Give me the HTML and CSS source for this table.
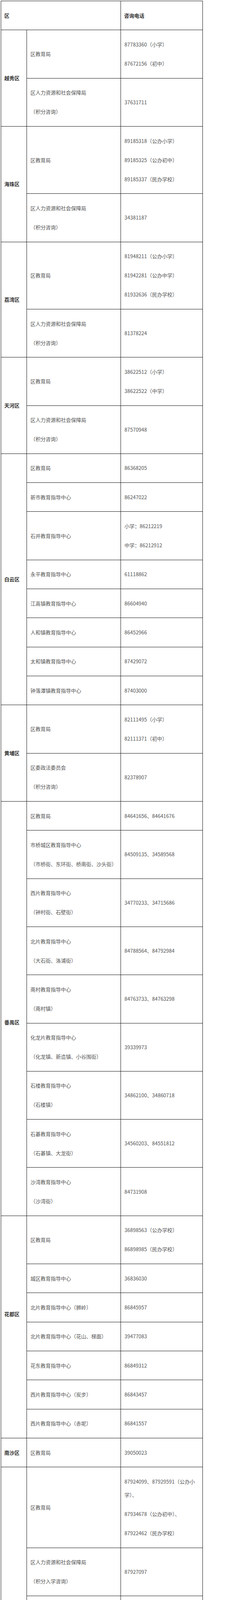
FILE: index.html
```html
<!DOCTYPE html>
<html lang="zh-CN">
<head>
<meta charset="utf-8">
<meta name="viewport" content="width=device-width, initial-scale=1">
<title>各区入学咨询电话</title>
<link rel="stylesheet" href="styles.css">
</head>
<body>
<table class="grid">
  <colgroup>
    <col class="c-dist">
    <col class="c-unit">
    <col class="c-tel">
  </colgroup>
  <thead>
    <tr><th colspan="2"><p>区</p></th><th><p>咨询电话</p></th></tr>
  </thead>
  <tbody>
    <tr><td class="dist" rowspan="2"><p>越秀区</p></td><td><p>区教育局</p></td><td><p>87783360（小学）</p><p>87672156（初中）</p></td></tr>
    <tr><td><p>区人力资源和社会保障局</p><p>（积分咨询）</p></td><td><p>37631711</p></td></tr>

    <tr><td class="dist" rowspan="2"><p>海珠区</p></td><td><p>区教育局</p></td><td><p>89185318（公办小学）</p><p>89185325（公办初中）</p><p>89185337（民办学校）</p></td></tr>
    <tr><td><p>区人力资源和社会保障局</p><p>（积分咨询）</p></td><td><p>34381187</p></td></tr>

    <tr><td class="dist" rowspan="2"><p>荔湾区</p></td><td><p>区教育局</p></td><td><p>81948211（公办小学）</p><p>81942281（公办中学）</p><p>81932636（民办学校）</p></td></tr>
    <tr><td><p>区人力资源和社会保障局</p><p>（积分咨询）</p></td><td><p>81378224</p></td></tr>

    <tr><td class="dist" rowspan="2"><p>天河区</p></td><td><p>区教育局</p></td><td><p>38622512（小学）</p><p>38622522（中学）</p></td></tr>
    <tr><td><p>区人力资源和社会保障局</p><p>（积分咨询）</p></td><td><p>87570948</p></td></tr>

    <tr><td class="dist" rowspan="8"><p>白云区</p></td><td><p>区教育局</p></td><td><p>86368205</p></td></tr>
    <tr><td><p>新市教育指导中心</p></td><td><p>86247022</p></td></tr>
    <tr><td><p>石井教育指导中心</p></td><td><p>小学：86212219</p><p>中学：86212912</p></td></tr>
    <tr><td><p>永平教育指导中心</p></td><td><p>61118862</p></td></tr>
    <tr><td><p>江高镇教育指导中心</p></td><td><p>86604940</p></td></tr>
    <tr><td><p>人和镇教育指导中心</p></td><td><p>86452966</p></td></tr>
    <tr><td><p>太和镇教育指导中心</p></td><td><p>87429072</p></td></tr>
    <tr><td><p>钟落潭镇教育指导中心</p></td><td><p>87403000</p></td></tr>

    <tr><td class="dist" rowspan="2"><p>黄埔区</p></td><td><p>区教育局</p></td><td><p>82111495（小学）</p><p>82111371（初中）</p></td></tr>
    <tr><td><p>区委政法委员会</p><p>（积分咨询）</p></td><td><p>82378907</p></td></tr>

    <tr><td class="dist dist-low" rowspan="9"><p>番禺区</p></td><td><p>区教育局</p></td><td><p>84641656、84641676</p></td></tr>
    <tr><td><p>市桥城区教育指导中心</p><p>（市桥街、东环街、桥南街、沙头街）</p></td><td><p>84509135、34589568</p></td></tr>
    <tr><td><p>西片教育指导中心</p><p>（钟村街、石壁街）</p></td><td><p>34770233、34715686</p></td></tr>
    <tr><td><p>北片教育指导中心</p><p>（大石街、洛浦街）</p></td><td><p>84788564、84792984</p></td></tr>
    <tr><td><p>南村教育指导中心</p><p>（南村镇）</p></td><td><p>84763733、84763298</p></td></tr>
    <tr><td><p>化龙片教育指导中心</p><p>（化龙镇、新造镇、小谷围街）</p></td><td><p>39339973</p></td></tr>
    <tr><td><p>石楼教育指导中心</p><p>（石楼镇）</p></td><td><p>34862100、34860718</p></td></tr>
    <tr><td><p>石碁教育指导中心</p><p>（石碁镇、大龙街）</p></td><td><p>34560203、84551812</p></td></tr>
    <tr><td><p>沙湾教育指导中心</p><p>（沙湾街）</p></td><td><p>84731908</p></td></tr>

    <tr><td class="dist dist-high" rowspan="7"><p>花都区</p></td><td><p>区教育局</p></td><td><p>36898563（公办学校）</p><p>86898985（民办学校）</p></td></tr>
    <tr><td><p>城区教育指导中心</p></td><td><p>36836030</p></td></tr>
    <tr><td><p>北片教育指导中心（狮岭）</p></td><td><p>86845957</p></td></tr>
    <tr><td><p>北片教育指导中心（花山、梯面）</p></td><td><p>39477083</p></td></tr>
    <tr><td><p>花东教育指导中心</p></td><td><p>86849312</p></td></tr>
    <tr><td><p>西片教育指导中心（炭步）</p></td><td><p>86843457</p></td></tr>
    <tr><td><p>西片教育指导中心（赤坭）</p></td><td><p>86841557</p></td></tr>

    <tr><td class="dist"><p>南沙区</p></td><td><p>区教育局</p></td><td><p>39050023</p></td></tr>

    <tr><td class="dist" rowspan="7"><p>从化区</p></td><td><p>区教育局</p></td><td><p>87924099、87929591（公办小<br>学）、</p><p>87934678（公办初中）、</p><p>87922462（民办学校）</p></td></tr>
    <tr><td><p>区人力资源和社会保障局</p><p>（积分入学咨询）</p></td><td><p>87927097</p></td></tr>
    <tr><td><p>城东教育指导中心</p><p>（温泉镇、江埔街）</p></td><td><p>37923787</p></td></tr>
    <tr><td><p>城西教育指导中心</p><p>（街口街、城郊街、明珠工业园）</p></td><td><p>87930786</p></td></tr>
    <tr><td><p>太平教育指导中心</p><p>（太平镇、高技术产业园区）</p></td><td><p>87811231</p></td></tr>
    <tr><td><p>鳌头教育指导中心</p><p>（鳌头镇）</p></td><td><p>87876756</p></td></tr>
    <tr><td><p>北片教育指导中心</p><p>（吕田镇、良口镇、林场）</p></td><td><p>87856073</p></td></tr>

    <tr><td class="dist" rowspan="15"><p>增城区</p></td><td><p>区教育局</p></td><td><p>82624166（公办学校）</p><p>82638103（民办学校）</p></td></tr>
    <tr><td><p>区人力资源和社会保障局</p><p>(就业服务中心)</p></td><td><p>32829165（积分咨询）</p></td></tr>
    <tr><td><p>荔城教育指导中心（荔城街）</p></td><td><p>82752089</p></td></tr>
    <tr><td><p>增江荔湖教育指导中心（荔湖街）</p></td><td><p>82719577</p></td></tr>
    <tr><td><p>增江荔湖教育指导中心（增江街）</p></td><td><p>82719577</p></td></tr>
    <tr><td><p>朱村中新教育指导中心（朱村街）</p></td><td><p>32952626</p></td></tr>
    <tr><td><p>朱村中新教育指导中心（中新镇）</p></td><td><p>82868880</p></td></tr>
    <tr><td><p>永宁宁西教育指导中心（永宁街）</p></td><td><p>82979938</p></td></tr>
    <tr><td><p>永宁宁西教育指导中心（宁西街）</p></td><td><p>82979938</p></td></tr>
    <tr><td><p>新塘教育指导中心（新塘镇）</p></td><td><p>82764325</p></td></tr>
    <tr><td><p>石滩仙村教育指导中心（石滩镇）</p></td><td><p>82926912</p></td></tr>
    <tr><td><p>石滩仙村教育指导中心（仙村镇）</p></td><td><p>82993002</p></td></tr>
    <tr><td><p>北片区教育指导中心（派潭镇）</p></td><td><p>82822012</p></td></tr>
    <tr><td><p>北片区教育指导中心（小楼镇）</p></td><td><p>82848944</p></td></tr>
    <tr><td><p>北片区教育指导中心（正果镇）</p></td><td><p>82811017</p></td></tr>
  </tbody>
</table>
</body>
</html>
```

FILE: styles.css
```css
html, body {
  margin: 0;
  padding: 0;
  background: #ffffff;
  -webkit-text-size-adjust: 100%;
  text-size-adjust: 100%;
}

body {
  font-family: "Noto Sans CJK SC", "Noto Sans", sans-serif;
  font-size: 13px;
  color: #555555;
}

.grid {
  margin: 2px 0 0 2px;
  width: 517px;
  table-layout: fixed;
  border-collapse: collapse;
  border-spacing: 0;
}

.c-dist { width: 66px; }
.c-unit { width: 241px; }
.c-tel  { width: 210px; }

.grid th,
.grid td {
  border: 1px solid #111111;
  padding: 19.67px 9px;
  vertical-align: middle;
  text-align: left;
  font-weight: normal;
}

.grid th {
  color: #333333;
  font-weight: bold;
  padding-left: 8px;
}

.grid p {
  margin: 0;
  line-height: 34px;
  white-space: nowrap;
}

.grid p + p {
  margin-top: 15px;
}

.grid td.dist {
  padding-left: 8px;
  padding-right: 4px;
  color: #333333;
  font-weight: bold;
}

.grid td.dist-low {
  padding-top: 89.67px;
}

.grid td.dist-high {
  padding-bottom: 85.67px;
}
```
